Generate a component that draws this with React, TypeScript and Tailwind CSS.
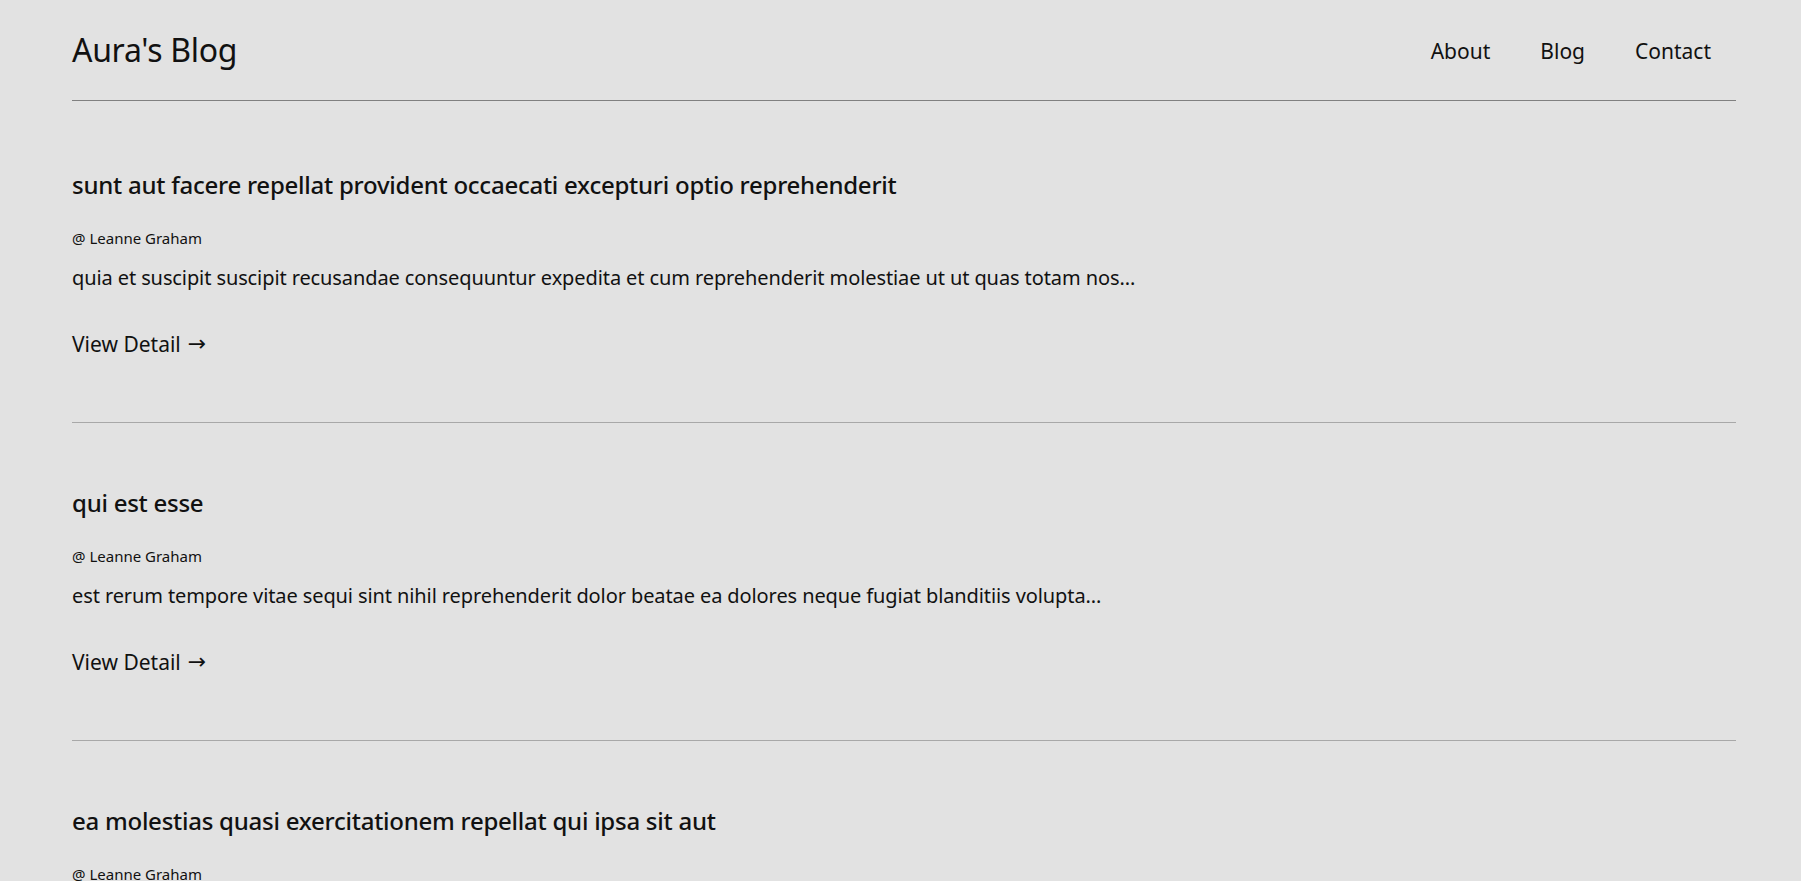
import React from "react";

const posts = [
  {
    title: "sunt aut facere repellat provident occaecati excepturi optio reprehenderit",
    author: "Leanne Graham",
    body: "quia et suscipit suscipit recusandae consequuntur expedita et cum reprehenderit molestiae ut ut quas totam nos...",
  },
  {
    title: "qui est esse",
    author: "Leanne Graham",
    body: "est rerum tempore vitae sequi sint nihil reprehenderit dolor beatae ea dolores neque fugiat blanditiis volupta...",
  },
  {
    title: "ea molestias quasi exercitationem repellat qui ipsa sit aut",
    author: "Leanne Graham",
    body: "et iusto sed quo iure voluptatem occaecati omnis eligendi aut ad voluptatem doloribus vel accusantium quis...",
  },
];

export default function App() {
  return (
    <div
      className="min-h-screen bg-[#e2e2e2] text-[#111] pl-[72px] pr-[65px]"
      style={{ fontFamily: '"Noto Sans", "Open Sans", sans-serif' }}
    >
      <header className="h-[101px] flex justify-between items-start border-b border-[#808080]">
        <h1 className="mt-[30px] text-[32px] leading-[40px] tracking-[-0.3px] font-normal">Aura's Blog</h1>
        <nav className="mt-[37px] flex">
          <a className="px-[25px] text-[21px] leading-[28px]" href="#">About</a>
          <a className="px-[25px] text-[21px] leading-[28px]" href="#">Blog</a>
          <a className="px-[25px] text-[21px] leading-[28px]" href="#">Contact</a>
        </nav>
      </header>
      <main className="pt-[4px]">
        {posts.map((p, i) => (
          <article key={i} className="pt-[64px] pb-[64px] border-b border-[#a8a8a8]">
            <h2 className="text-[24px] leading-[32px] font-medium tracking-[-0.25px]">{p.title}</h2>
            <p className="mt-[27px] text-[15px] leading-[20px]">@ {p.author}</p>
            <p className="mt-[16px] text-[20px] leading-[28px] tracking-[-0.1px]">{p.body}</p>
            <a href="#" className="flex items-center gap-[7px] mt-[38px] h-[28px] text-[21px] leading-[28px]">
              <span>View Detail</span>
              <span className="text-[22px] leading-none" style={{ fontFamily: '"DejaVu Sans", sans-serif' }}>→</span>
            </a>
          </article>
        ))}
      </main>
    </div>
  );
}
